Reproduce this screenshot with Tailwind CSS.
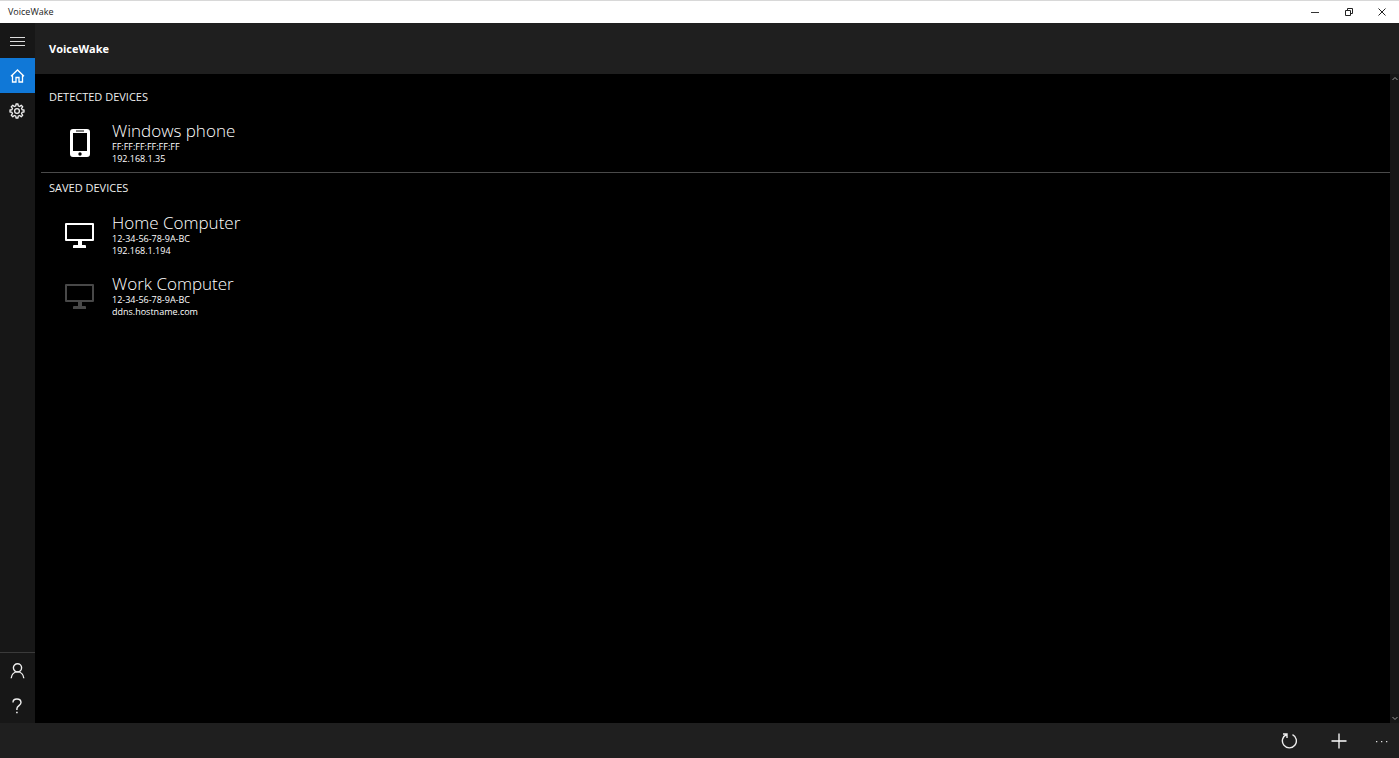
<!DOCTYPE html>
<html lang="en">
<head>
  <meta charset="UTF-8" />
  <meta name="viewport" content="width=device-width, initial-scale=1" />
  <title>VoiceWake</title>
  <script src="https://cdn.jsdelivr.net/npm/@tailwindcss/browser@4"></script>
</head>

<body class="flex flex-col h-screen overflow-hidden bg-black text-white font-['Open_Sans',sans-serif]">

  <!-- Title bar -->
  <div class="flex items-center justify-between h-[23px] shrink-0 bg-white border-t border-[#d8d8d8] text-[#222] pl-2">
    <span class="text-[9px] leading-3">VoiceWake</span>
    <div class="flex h-full">
      <button aria-label="Minimize" class="w-[34px] flex items-center justify-center">
        <svg class="size-3" viewBox="0 0 12 12" fill="none" stroke="#333"><path d="M2 6.500h8" /></svg>
      </button>
      <button aria-label="Restore" class="w-[33px] flex items-center justify-center">
        <svg class="size-3" viewBox="0 0 12 12" fill="none" stroke="#222"><path d="M2.500 4.500h5v5h-5zM4.500 4.500v-2h5v5h-2" /></svg>
      </button>
      <button aria-label="Close" class="w-[34px] flex items-center justify-center">
        <svg class="size-3" viewBox="0 0 12 12" fill="none" stroke="#222"><path d="M2.500 2.500l7 7M9.500 2.500l-7 7" /></svg>
      </button>
    </div>
  </div>

  <div class="flex flex-1 min-h-0">
    <!-- Navigation -->
    <nav class="flex flex-col w-[35px] shrink-0 bg-[#171717]">
      <button aria-label="Menu" class="h-[35px] pr-px flex items-center justify-center">
        <svg class="size-4" viewBox="0 0 16 16" fill="none" stroke="#ddd"><path d="M1 4.500h15M1 8.500h15M1 12.500h15" /></svg>
      </button>
      <a href="#home" aria-label="Home" class="h-[35px] pr-px flex items-center justify-center bg-[#1078d7]">
        <svg class="size-4" viewBox="0 0 16 16" fill="none" stroke="#fff" stroke-width="1.300"><path d="M2 8.300 8.500 2 15 8.300M3.500 7v7H7V9.500h3V14h3.500V7" /></svg>
      </a>
      <a href="#settings" aria-label="Settings" class="h-[35px] pr-px flex items-center justify-center">
        <svg class="size-4" viewBox="0 0 16 16" fill="none" stroke="#eee" stroke-width="1.300" stroke-linejoin="round">
          <path d="M6.800 2.900 7 1h2l.2 1.900 1.500.6 1.500-1.200 1.500 1.500-1.200 1.500.6 1.500L15 7v2l-1.900.2-.6 1.500 1.200 1.500-1.500 1.500-1.500-1.200-1.500.6L9 15H7l-.2-1.900-1.500-.6-1.500 1.200-1.500-1.500 1.200-1.500-.6-1.500L1 9V7l1.900-.2.6-1.500-1.200-1.500 1.500-1.500 1.500 1.200z" />
          <circle cx="8" cy="8" r="2.400" />
        </svg>
      </a>
      <div class="mt-auto border-t border-[#3a3a3a]">
        <button aria-label="Account" class="w-full h-[35px] pr-px flex items-center justify-center">
          <svg class="size-4" viewBox="0 0 16 16" fill="none" stroke="#eee" stroke-width="1.400"><circle cx="8.500" cy="4.800" r="4.100" /><path d="M2.200 15.300C2.500 11.500 5.100 8.900 8.500 8.900s6 2.600 6.300 6.400" /></svg>
        </button>
        <button aria-label="Help" class="w-full h-[35px] pr-px flex items-center justify-center">
          <svg class="size-4" viewBox="0 0 16 16" fill="none" stroke="#eee" stroke-width="1.400"><path d="M4 4.500C4 2.300 5.600 1 7.900 1S12 2.400 12 4.600C12 7.500 7.900 7.800 7.900 10.800V12" /><path d="M7.900 13.700v1.600" stroke-width="1.600" /></svg>
        </button>
      </div>
    </nav>

    <div class="flex flex-col flex-1 min-w-0">
      <header class="flex items-center h-[51px] shrink-0 bg-[#1f1f1f] px-[14px]">
        <h1 class="text-[11px] leading-4 font-bold">VoiceWake</h1>
      </header>

      <div class="flex flex-1 min-h-0">
        <main class="flex-1 min-w-0 pl-[6px]">
          <section class="border-b border-[#4a4a4a] pt-[15px]">
            <h2 class="pl-2 text-[11px] leading-4 text-[#eee]">DETECTED DEVICES</h2>
            <ul class="pt-2">
              <li class="flex items-center h-[59px] pl-[23px] gap-4">
                <svg class="size-8 shrink-0" viewBox="0 0 32 32">
                  <path fill="#fff" fill-rule="evenodd" d="M9 2h14q3 0 3 3v22q0 3-3 3H9q-3 0-3-3V5q0-3 3-3zM9 6v18h14V6zM12 3.500v1h8v-1z" />
                  <circle cx="16" cy="27" r="1.700" fill="#000" />
                </svg>
                <div>
                  <h3 class="text-[17px] leading-5 font-light">Windows phone</h3>
                  <p class="text-[9px] leading-3">FF:FF:FF:FF:FF:FF</p>
                  <p class="text-[9px] leading-3">192.168.1.35</p>
                </div>
              </li>
            </ul>
          </section>

          <section class="pt-[7px]">
            <h2 class="pl-2 text-[11px] leading-4 text-[#eee]">SAVED DEVICES</h2>
            <ul class="pt-2">
              <li class="flex items-center h-[61px] pl-[23px] gap-4">
                <svg class="size-8 shrink-0" viewBox="0 0 32 32" fill="#fff">
                  <path fill-rule="evenodd" d="M2 4h27q1 0 1 1v16q0 1-1 1H2q-1 0-1-1V5q0-1 1-1zM3 6v14h25V6z" />
                  <path d="M14 22h4v4h3q1 0 1 1v2H9v-2q0-1 1-1h4z" />
                </svg>
                <div>
                  <h3 class="text-[17px] leading-5 font-light">Home Computer</h3>
                  <p class="text-[9px] leading-3">12-34-56-78-9A-BC</p>
                  <p class="text-[9px] leading-3">192.168.1.194</p>
                </div>
              </li>
              <li class="flex items-center h-[61px] pl-[23px] gap-4">
                <svg class="size-8 shrink-0" viewBox="0 0 32 32" fill="#484848">
                  <path fill-rule="evenodd" d="M2 4h27q1 0 1 1v16q0 1-1 1H2q-1 0-1-1V5q0-1 1-1zM3 6v14h25V6z" />
                  <path d="M14 22h4v4h3q1 0 1 1v2H9v-2q0-1 1-1h4z" />
                </svg>
                <div>
                  <h3 class="text-[17px] leading-5 font-light">Work Computer</h3>
                  <p class="text-[9px] leading-3">12-34-56-78-9A-BC</p>
                  <p class="text-[9px] leading-3">ddns.hostname.com</p>
                </div>
              </li>
            </ul>
          </section>
        </main>

        <!-- Scroll bar -->
        <div class="flex flex-col justify-between items-center w-[9px] py-px bg-[#171717]">
          <svg class="size-2" viewBox="0 0 8 8" fill="none" stroke="#999"><path d="M1.500 5 4 2.500 6.500 5" /></svg>
          <svg class="size-2" viewBox="0 0 8 8" fill="none" stroke="#999"><path d="M1.500 3 4 5.500 6.500 3" /></svg>
        </div>
      </div>
    </div>
  </div>

  <!-- Command bar -->
  <footer class="flex justify-end h-[35px] shrink-0 bg-[#1f1f1f]">
    <button aria-label="Refresh" class="w-[50px] flex items-center justify-center">
      <svg class="size-4" viewBox="0 0 16 16" fill="none" stroke="#eee" stroke-width="1.400"><path d="M11.500 1.600A7 7 0 1 1 5.500 1.500M2 1h4v4" /></svg>
    </button>
    <button aria-label="Add" class="w-[50px] flex items-center justify-center">
      <svg class="size-4" viewBox="0 0 16 16" fill="none" stroke="#fff" stroke-width="1.300"><path d="M8 .5v15M.5 8h15" /></svg>
    </button>
    <button aria-label="More" class="w-[35px] flex items-center justify-center">
      <svg class="size-4" viewBox="0 0 16 16" fill="#ddd"><path d="M2 8h1.300v1.300H2zM7 8h1.300v1.300H7zM12 8h1.300v1.300H12z" /></svg>
    </button>
  </footer>

</body>
</html>
